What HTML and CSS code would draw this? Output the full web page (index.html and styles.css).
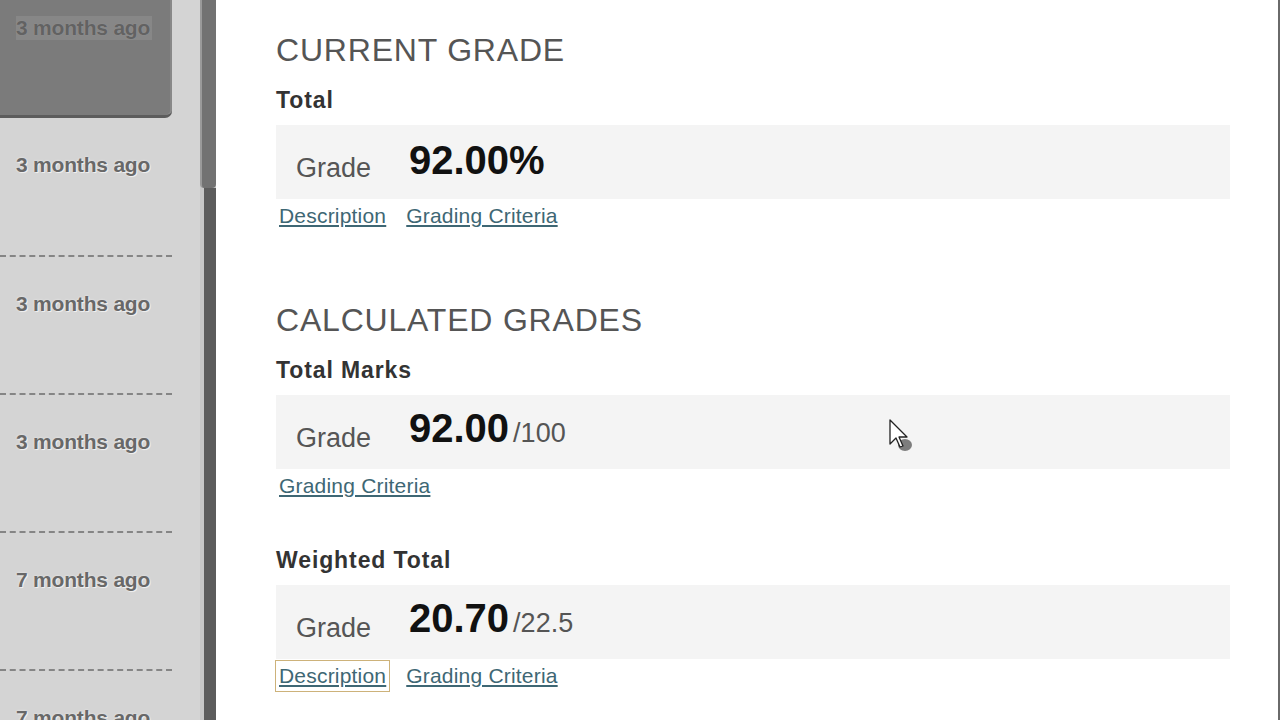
FILE: index.html
```html
<!DOCTYPE html>
<html lang="en">
<head>
<meta charset="utf-8">
<title>Grades</title>
<link rel="stylesheet" href="styles.css">
</head>
<body>
<div class="app">
  <aside class="sidebar">
    <div class="side-item side-item--active"><span class="side-time">3 months ago</span></div>
    <div class="side-item"><span class="side-time">3 months ago</span></div>
    <div class="side-item"><span class="side-time">3 months ago</span></div>
    <div class="side-item"><span class="side-time">3 months ago</span></div>
    <div class="side-item"><span class="side-time">7 months ago</span></div>
    <div class="side-item"><span class="side-time">7 months ago</span></div>
  </aside>
  <div class="scrollbar"><div class="scroll-thumb"></div><div class="scroll-track"></div></div>
  <main class="main">
    <h2 class="section-title">CURRENT GRADE</h2>
    <div class="grade-item grade-item--first">
      <h3 class="item-title">Total</h3>
      <div class="grade-box">
        <span class="grade-label">Grade</span>
        <span class="grade-value">92.00%</span>
      </div>
      <div class="links">
        <a href="#" class="link">Description</a>
        <a href="#" class="link">Grading Criteria</a>
      </div>
    </div>

    <h2 class="section-title section-title--second">CALCULATED GRADES</h2>
    <div class="grade-item grade-item--first">
      <h3 class="item-title">Total Marks</h3>
      <div class="grade-box">
        <span class="grade-label">Grade</span>
        <span class="grade-value">92.00<span class="grade-max">/100</span></span>
      </div>
      <div class="links">
        <a href="#" class="link">Grading Criteria</a>
      </div>
    </div>
    <div class="grade-item grade-item--next">
      <h3 class="item-title">Weighted Total</h3>
      <div class="grade-box">
        <span class="grade-label">Grade</span>
        <span class="grade-value">20.70<span class="grade-max">/22.5</span></span>
      </div>
      <div class="links">
        <a href="#" class="link link--focus">Description</a>
        <a href="#" class="link">Grading Criteria</a>
      </div>
    </div>

    <svg class="cursor" width="30" height="40" viewBox="0 0 30 40" aria-hidden="true">
      <ellipse cx="17" cy="27" rx="7" ry="6" fill="#555" opacity="0.75"/>
      <path d="M2 2 L2 26 L8 20 L12 29 L15 28 L11 19 L19 19 Z" fill="#fff" stroke="#222" stroke-width="1.3" stroke-linejoin="round"/>
    </svg>
  </main>
</div>
</body>
</html>
```

FILE: styles.css
```css
html, body {
  margin: 0;
  padding: 0;
  height: 720px;
  overflow: hidden;
  background: #ffffff;
  font-family: "Liberation Sans", Arial, sans-serif;
}

.app {
  display: flex;
  height: 720px;
  border-right: 2px solid #6a6a6a;
  box-sizing: border-box;
}

/* ---------- sidebar ---------- */
.sidebar {
  width: 200px;
  flex: none;
  background: #d4d4d4;
  display: flex;
  flex-direction: column;
}

.side-item {
  width: 172px;
  height: 138px;
  flex: none;
  box-sizing: border-box;
  padding: 35px 0 0 16px;
  border-bottom: 2px dashed #858585;
}

.side-item:nth-child(2) {
  height: 139px;
}

.side-item--active {
  height: 118px;
  background: #7b7b7b;
  border-bottom: 3px solid #5c5c5c;
  border-bottom-right-radius: 7px;
  box-shadow: inset -2px 0 0 #888;
  padding-top: 16px;
}

.side-time {
  display: block;
  font-size: 21px;
  line-height: 24px;
  font-weight: bold;
  color: #686868;
  letter-spacing: -0.2px;
  text-shadow: 0 0 2px #f2f2f2, 1px 1px 0 #eeeeee;
}

.side-item--active .side-time {
  color: #626262;
  width: 136px;
  background: #878787;
  text-shadow: 0 0 1px #a0a0a0;
}

/* ---------- scrollbar ---------- */
.scrollbar {
  width: 16px;
  flex: none;
  display: flex;
  flex-direction: column;
  background: #c6c6c6;
}

.scroll-thumb {
  height: 188px;
  background: #727272;
  border-left: 2px solid #9a9a9a;
  border-radius: 0 0 4px 4px;
}

.scroll-track {
  flex: 1;
  margin-left: 4px;
  background: #5c5c5c;
}

/* ---------- main ---------- */
.main {
  position: relative;
  flex: 1;
  padding: 32px 48px 0 60px;
  color: #555;
}

.section-title {
  margin: 0;
  font-size: 32px;
  line-height: 36px;
  font-weight: normal;
  color: #555555;
  letter-spacing: 0.8px;
}

.section-title--second {
  margin-top: 74px;
}

.grade-item--first {
  margin-top: 19px;
}

.grade-item--next {
  margin-top: 49px;
}

.item-title {
  margin: 0;
  font-size: 23px;
  line-height: 26px;
  font-weight: bold;
  color: #333333;
  letter-spacing: 0.9px;
}

.grade-box {
  margin-top: 12px;
  height: 74px;
  background: #f4f4f4;
  display: flex;
  align-items: center;
  padding-left: 20px;
}

.grade-label {
  width: 113px;
  flex: none;
  font-size: 27px;
  line-height: 30px;
  padding-top: 12px;
  color: #555555;
}

.grade-value {
  font-size: 40px;
  line-height: 44px;
  font-weight: bold;
  color: #111111;
  margin-top: -4px;
}

.grade-max {
  font-size: 27px;
  font-weight: normal;
  color: #555555;
  margin-left: 4px;
}

.links {
  margin-top: 5px;
  display: flex;
  gap: 20px;
  padding-left: 3px;
}

.link {
  font-size: 21px;
  line-height: 24px;
  letter-spacing: 0.2px;
  color: #3e6774;
  text-decoration: underline;
  text-underline-offset: 2px;
}

.link--focus {
  outline: 1px solid #cdb27a;
  outline-offset: 3px;
}

.cursor {
  position: absolute;
  left: 672px;
  top: 418px;
}
```
